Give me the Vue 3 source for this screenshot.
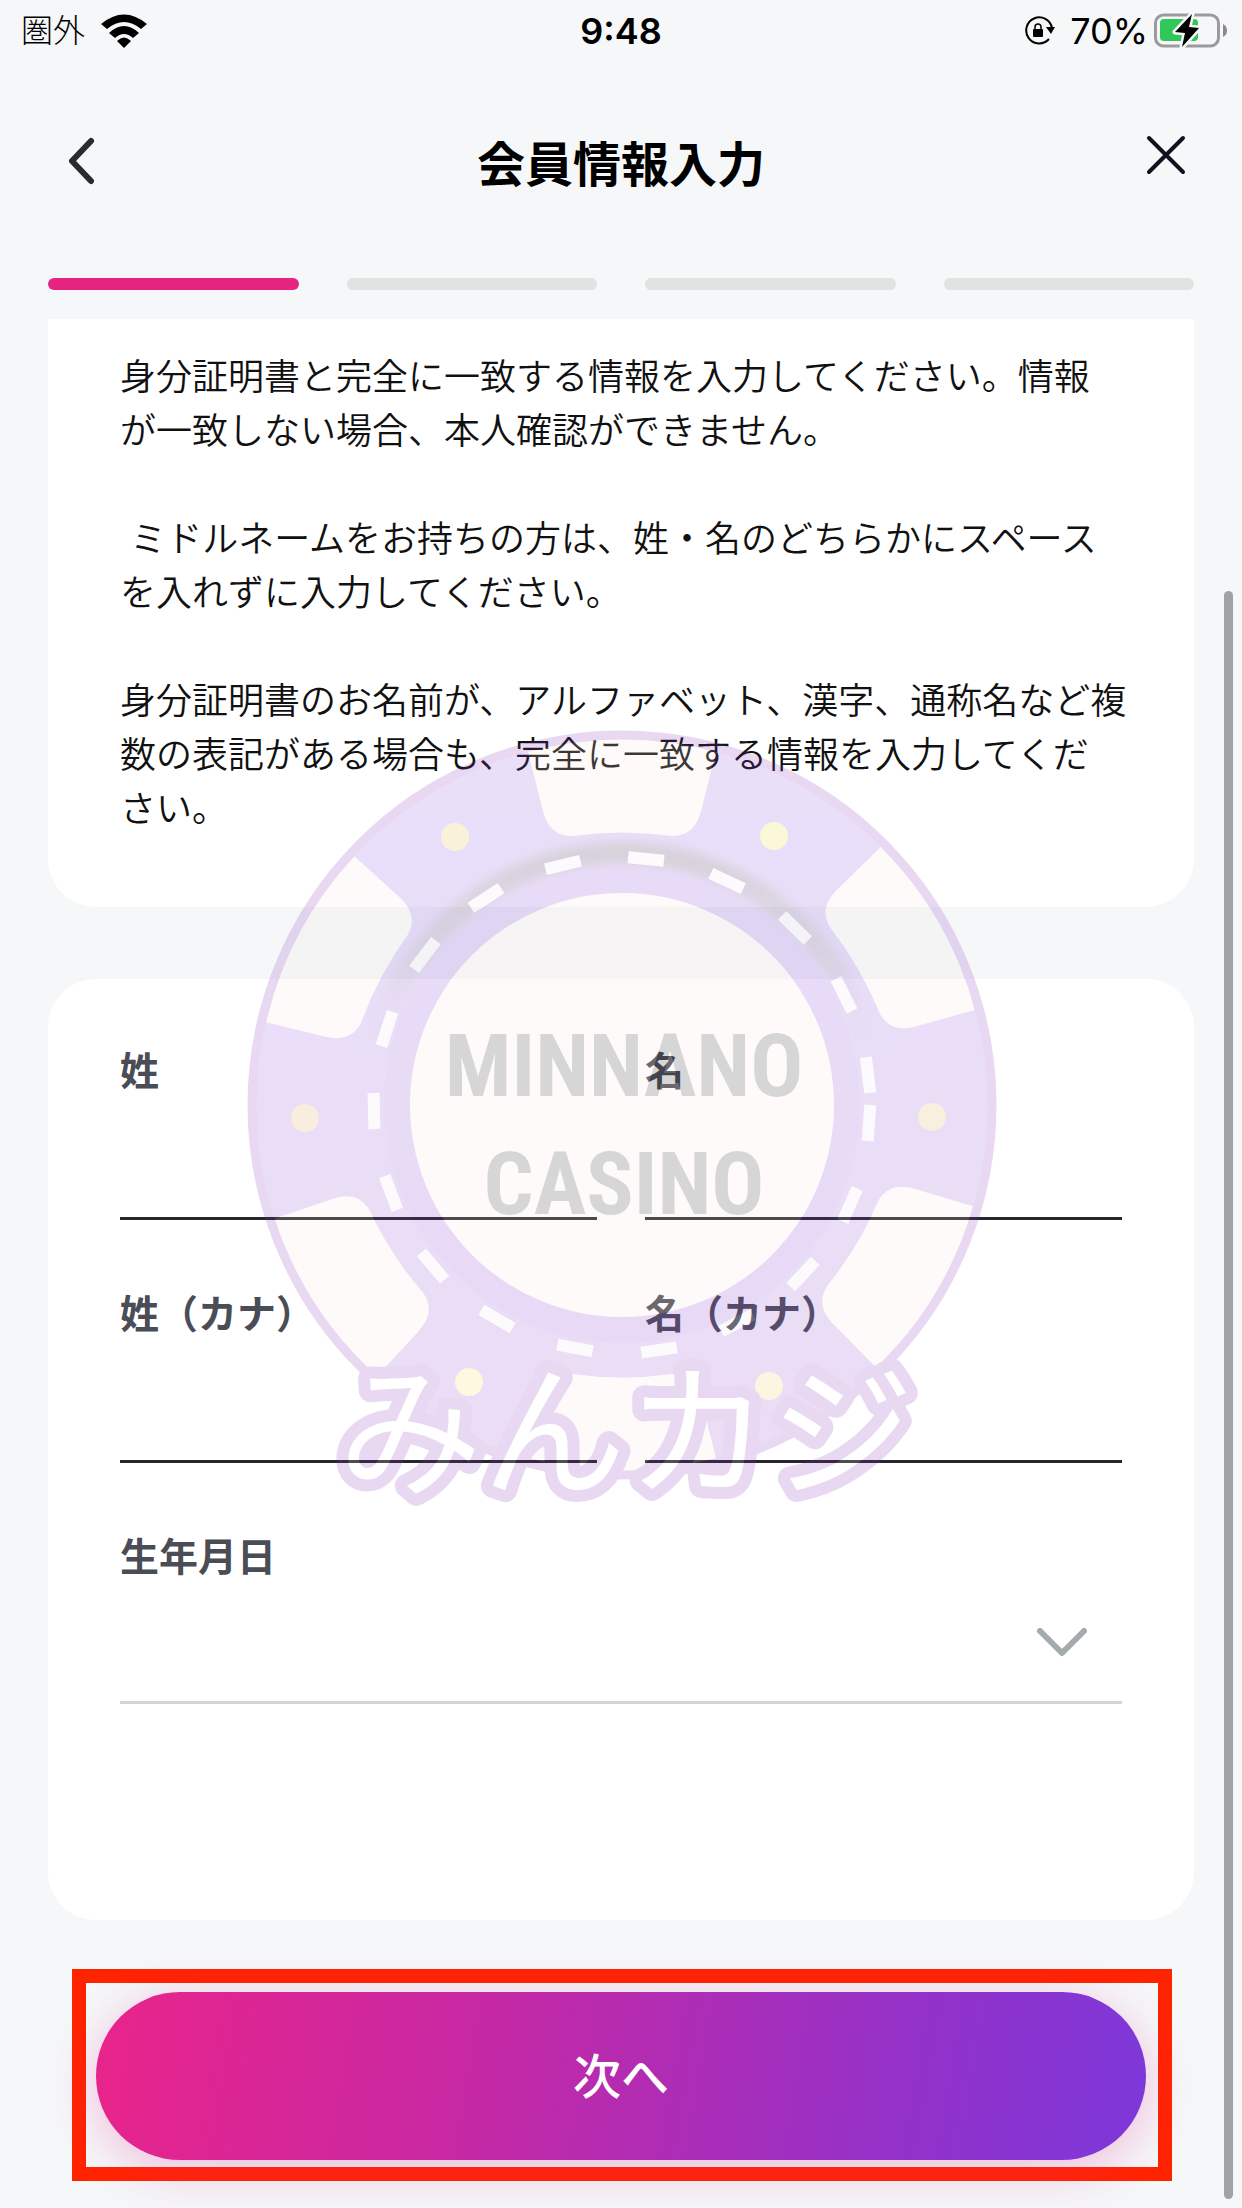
<template>
  <div class="page">
    <header class="status-bar">
      <div class="status-left">
        <span class="carrier">圏外</span>
        <svg class="wifi" viewBox="0 0 46 34" aria-hidden="true">
          <path d="M0 10 Q23 -9 46 10 L40 15 Q23 1 6 15Z" />
          <path d="M8 19 Q23 5 38 19 L32 24 Q23 16 14 24Z" />
          <path d="M16 27 Q23 20 30 27 L23 34Z" />
        </svg>
      </div>
      <span class="time">9:48</span>
      <div class="status-right">
        <svg class="rotation-lock" viewBox="0 0 32 30" aria-hidden="true">
          <path d="M28 12 A13 13 0 1 0 25 23" fill="none" stroke="#000" stroke-width="2" />
          <path d="M22 11 L31 11 L27 18Z" />
          <rect x="9" y="13" width="10" height="8" rx="1" />
          <path d="M11 14 V11 a3 3 0 0 1 6 0 V14" fill="none" stroke="#000" stroke-width="1.5" />
        </svg>
        <span class="percent">70%</span>
        <svg class="battery" viewBox="0 0 74 36" aria-hidden="true">
          <rect x="1.5" y="2" width="63" height="31" rx="8" fill="none" stroke="#9b9b9d" stroke-width="3" />
          <rect x="6" y="6" width="38" height="22" rx="4" fill="#32c759" />
          <path d="M69 11 Q73 13 73 17.500 Q73 22 69 24Z" fill="#8b8b8d" />
          <path
            d="M38 1 L21 19 L31 20 L28 34 L45 15 L35 14Z"
            fill="#000"
            stroke="#f5f7f9"
            stroke-width="5"
            stroke-linejoin="round"
            paint-order="stroke"
          />
        </svg>
      </div>
    </header>

    <nav class="title-bar">
      <button class="icon-button back" type="button" aria-label="戻る">
        <svg class="back-icon" viewBox="0 0 28 48">
          <path d="M23 4 L4 24 L23 44" />
        </svg>
      </button>
      <h1>会員情報入力</h1>
      <button class="icon-button close" type="button" aria-label="閉じる">
        <svg class="close-icon" viewBox="0 0 40 40">
          <path d="M3 3 L37 37 M37 3 L3 37" />
        </svg>
      </button>
    </nav>

    <div class="steps">
      <span v-for="n in 4" :key="n" class="step" :class="{ active: n === 1 }"></span>
    </div>

    <form @submit.prevent>
      <section class="notice">{{ notice }}</section>

      <section class="fields">
        <div v-for="f in fields" :key="f.id" class="field">
          <label :for="f.id">{{ f.label }}</label>
          <input :id="f.id" v-model="f.value" type="text" />
        </div>
        <div class="field birthday">
          <label for="birthday">生年月日</label>
          <select id="birthday" v-model="birthday">
            <option value=""></option>
          </select>
          <svg class="select-icon" viewBox="0 0 50 30" aria-hidden="true">
            <path d="M3 3 L25 25 L47 3" />
          </svg>
        </div>
      </section>

      <div class="submit-frame">
        <button class="submit" type="submit">次へ</button>
      </div>
    </form>

    <svg class="watermark" viewBox="239 725 764 860" aria-hidden="true">
      <defs>
        <linearGradient id="ring" x1="0" y1="0" x2="0" y2="1">
          <stop offset="0" stop-color="#8a52e4" />
          <stop offset="1" stop-color="#9146c8" />
        </linearGradient>
        <linearGradient id="shade" x1="0" y1="0" x2="0" y2="1">
          <stop offset="0" stop-color="#2c0c44" />
          <stop offset="0.2" stop-color="#42205e" stop-opacity="0.7" />
          <stop offset="0.4" stop-color="#7a35b8" stop-opacity="0" />
        </linearGradient>
        <filter id="soft">
          <feGaussianBlur stdDeviation="4" />
        </filter>
      </defs>
      <circle cx="622" cy="1105" r="370" fill="url(#ring)" stroke="#8c2fb8" stroke-width="9" />
      <circle cx="622" cy="1105" r="252" fill="none" stroke="url(#shade)" stroke-width="22" filter="url(#soft)" />
      <circle cx="622" cy="1105" r="225" fill="none" stroke="#7a30d0" stroke-opacity="0.6" stroke-width="26" />
      <g fill="#fae9e4">
        <path
          v-for="angle in wedges"
          :key="angle"
          :transform="`translate(622 1105) rotate(${angle})`"
          d="M-94 -353 A365 365 0 0 1 94 -353 L80 -298 C76 -280 68 -269 50 -269 Q0 -276 -50 -269 C-68 -269 -76 -280 -80 -298Z"
        />
      </g>
      <circle v-for="d in dots" :key="d.x" :cx="d.x" :cy="d.y" r="14" :fill="d.color" />
      <g fill="#f0e8f8">
        <rect
          v-for="(d, i) in dashes"
          :key="i"
          x="-18"
          y="-6"
          width="36"
          height="12"
          :transform="`translate(${d[0]} ${d[1]}) rotate(${tangent(d)})`"
        />
      </g>
      <circle cx="622" cy="1105" r="212" fill="#ffe9e4" />
      <g class="chip-text">
        <text x="624" y="1096">MINNANO</text>
        <text x="624" y="1214">CASINO</text>
      </g>
      <text class="brand" x="626" y="1485">みんカジ</text>
    </svg>

    <div class="scroll-thumb"></div>
  </div>
</template>

<script setup>
import { ref } from "vue";

const notice = `身分証明書と完全に一致する情報を入力してください。情報
が一致しない場合、本人確認ができません。

 ミドルネームをお持ちの方は、姓・名のどちらかにスペース
を入れずに入力してください。

身分証明書のお名前が、アルファベット、漢字、通称名など複
数の表記がある場合も、完全に一致する情報を入力してくだ
さい。`;

const fields = ref([
  { id: "last-name", label: "姓", value: "" },
  { id: "first-name", label: "名", value: "" },
  { id: "last-kana", label: "姓（カナ）", value: "" },
  { id: "first-kana", label: "名（カナ）", value: "" },
]);
const birthday = ref("");

// casino chip
const wedges = [0, 60, 121, 180, -123, -62];
const dots = [
  { x: 455, y: 837, color: "#e3bc2b" },
  { x: 774, y: 836, color: "#e9dc29" },
  { x: 305, y: 1118, color: "#dea152" },
  { x: 932, y: 1117, color: "#dea852" },
  { x: 469, y: 1382, color: "#f4e050" },
  { x: 769, y: 1386, color: "#eed060" },
];
const dashes = [
  [563, 865],
  [486, 898],
  [425, 955],
  [387, 1029],
  [374, 1111],
  [391, 1193],
  [433, 1266],
  [497, 1319],
  [575, 1348],
  [659, 1350],
  [737, 1323],
  [803, 1274],
  [850, 1205],
  [869, 1123],
  [868, 1075],
  [844, 995],
  [795, 928],
  [727, 881],
  [646, 859],
];

function tangent([x, y]) {
  return (Math.atan2(y - 1105, x - 622) * 180) / Math.PI + 90;
}
</script>

<style>
body {
  background: #f5f7f9;
}
</style>

<style scoped>
.page {
  position: relative;
  min-height: 100vh;
  overflow: hidden;
  background: #f5f7f9;
  color: #111;
  font-family: Inter, "Noto Sans CJK JP", sans-serif;
}

button,
input,
select {
  font-family: inherit;
}

.status-bar {
  display: grid;
  grid-template-columns: 1fr auto 1fr;
  align-items: center;
  height: 62px;
  padding: 0 14px;
  box-sizing: border-box;
  color: #000;
  font-size: 36px;
  line-height: 48px;
}

.status-left,
.status-right {
  display: flex;
  align-items: center;
}

.status-left {
  gap: 16px;
  padding-left: 7px;
}

.status-right {
  justify-content: flex-end;
  gap: 6px;
}

.carrier {
  font-size: 32px;
  font-weight: 300;
}

.time {
  font-weight: 600;
}

.wifi {
  width: 46px;
  height: 34px;
}

.rotation-lock {
  width: 32px;
  height: 30px;
  margin-right: 8px;
}

.battery {
  width: 74px;
  height: 36px;
}

.title-bar {
  display: flex;
  align-items: center;
  justify-content: space-between;
  height: 206px;
  padding: 0 48px;
}

h1 {
  margin: 0;
  color: #000;
  font-size: 48px;
  line-height: 72px;
  font-weight: 700;
}

.icon-button {
  display: flex;
  width: 60px;
  height: 60px;
  padding: 0;
  border: 0;
  background: none;
  align-items: center;
  cursor: pointer;
}

.back {
  padding: 0 0 8px 20px;
}

.close {
  justify-content: flex-end;
  padding: 0 8px 20px 0;
}

.icon-button svg {
  flex: none;
  fill: none;
  stroke-linecap: round;
  stroke-linejoin: round;
}

.back-icon {
  width: 28px;
  height: 48px;
  stroke: #2a2b2e;
  stroke-width: 6;
}

.close-icon {
  width: 40px;
  height: 40px;
  stroke: #10121f;
  stroke-width: 4;
}

.steps {
  display: grid;
  grid-template-columns: repeat(4, 1fr);
  gap: 48px;
  padding: 10px 48px 29px;
}

.step {
  height: 12px;
  border-radius: 6px;
  background: #e1e2e2;
}

.step.active {
  background: #e52482;
}

.notice {
  margin: 0 48px;
  padding: 31px 64px 71px 72px;
  border-radius: 0 0 48px 48px;
  background: #fff;
  font-size: 36px;
  line-height: 54px;
  font-weight: 350;
  white-space: pre-wrap;
}

.fields {
  display: grid;
  grid-template-columns: 1fr 1fr;
  gap: 70px 48px;
  margin: 72px 48px 0;
  padding: 68px 72px 216px;
  border-radius: 48px;
  background: #fff;
}

.field {
  position: relative;
  display: flex;
  flex-direction: column;
}

label {
  color: #4a4d55;
  font-size: 39px;
  line-height: 48px;
  font-weight: 600;
}

input,
select {
  width: 100%;
  height: 125px;
  box-sizing: border-box;
  padding: 32px 0 0;
  border: 0;
  border-bottom: 3px solid #27272b;
  border-radius: 0;
  outline: 0;
  background: none;
  font-size: 36px;
}

.birthday {
  grid-column: 1 / -1;
}

select {
  height: 123px;
  appearance: none;
  border-bottom-color: #d0d4d4;
}

.select-icon {
  position: absolute;
  right: 35px;
  bottom: 46px;
  width: 50px;
  height: 30px;
  fill: none;
  stroke: #a5aaac;
  stroke-width: 6;
  stroke-linecap: round;
  stroke-linejoin: round;
  pointer-events: none;
}

.submit-frame {
  margin: 49px 70px 27px 72px;
  padding: 9px 12px 7px 10px;
  border: 14px solid #ff2400;
}

.submit {
  display: block;
  width: 100%;
  height: 168px;
  padding: 0 0 6px;
  border: 0;
  border-radius: 84px;
  background: linear-gradient(100deg, #e9248a 0%, #c928a2 34%, #9431c8 76%, #7d38da 100%);
  box-shadow: 0 10px 48px rgba(233, 36, 138, 0.28);
  color: #fff;
  font-size: 48px;
  font-weight: 500;
  cursor: pointer;
}

.watermark {
  position: absolute;
  top: 725px;
  right: 0;
  left: 0;
  width: 764px;
  height: 860px;
  margin: 0 auto;
  overflow: visible;
  opacity: 0.18;
  pointer-events: none;
}

.chip-text {
  fill: #202020;
  font-family: "Roboto Condensed", Roboto, sans-serif;
  font-size: 88px;
  font-weight: 700;
  text-anchor: middle;
}

.brand {
  fill: #fff;
  stroke: #8c2fb8;
  stroke-width: 24px;
  stroke-linejoin: round;
  paint-order: stroke;
  font-family: "Noto Sans CJK JP", sans-serif;
  font-size: 144px;
  font-weight: 400;
  text-anchor: middle;
}

.scroll-thumb {
  position: absolute;
  top: 591px;
  right: 9px;
  bottom: 9px;
  width: 9px;
  border-radius: 5px;
  background: #a1a2a4;
}
</style>
